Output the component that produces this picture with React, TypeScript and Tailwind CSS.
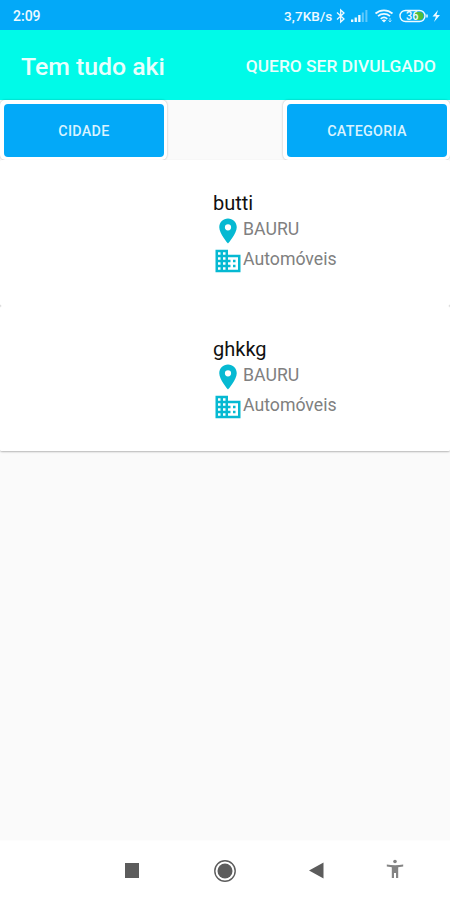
import React from "react";

function PinIcon() {
  return (
    <svg viewBox="0 0 24 24" className="h-[30px] w-[30px] shrink-0 fill-[#06b9d2]">
      <path d="M12 2C8.13 2 5 5.13 5 9c0 5.25 7 13 7 13s7-7.75 7-13c0-3.87-3.13-7-7-7zm0 9.5a2.5 2.5 0 0 1 0-5 2.5 2.5 0 0 1 0 5z" />
    </svg>
  );
}

function BuildingIcon() {
  return (
    <svg viewBox="0 0 24 24" className="h-[30px] w-[30px] shrink-0 fill-[#06b9d2]">
      <path d="M12 7V3H2v18h20V7H12zM6 19H4v-2h2v2zm0-4H4v-2h2v2zm0-4H4V9h2v2zm0-4H4V5h2v2zm4 12H8v-2h2v2zm0-4H8v-2h2v2zm0-4H8V9h2v2zm0-4H8V5h2v2zm10 12h-8v-2h2v-2h-2v-2h2v-2h-2V9h8v10zm-2-8h-2v2h2v-2zm0 4h-2v2h2v-2z" />
    </svg>
  );
}

function StatusBar() {
  return (
    <header className="flex h-[30px] items-center bg-[#03a9f8] pt-[2px] pl-[13px] text-[#eefaff]">
      <span className="w-[271px] text-[14px] leading-4 font-medium">2:09</span>
      <span className="w-[52px] text-[13.5px] leading-4 font-medium tracking-[0.1px] whitespace-nowrap">3,7KB/s</span>
      <svg width="114" height="18" viewBox="0 0 114 18" fill="none" className="shrink-0">
        <path d="M1 5.5 8 12 4.7 15V3L8 6 1 12.5" stroke="currentColor" strokeWidth="1.3" />
        <g fill="currentColor">
          <path d="M15 12.5h2.300V15H15zM18.600 10.500h2.300V15h-2.300zM22.200 8h2.300v7h-2.300z" />
          <path d="M25.800 5.500h2V15h-2zM29.400 3h2v12h-2z" opacity=".4" />
        </g>
        <g stroke="currentColor" strokeWidth="1.7">
          <path d="M39.500 6.500c5-4.300 12-4.300 17 0M42 9.200c3.500-3 8.500-3 12 0M44.700 11.800c2-1.700 4.600-1.700 6.600 0" />
        </g>
        <path d="m45.700 13.200 2.300 2.300 2.300-2.300c-1.400-1-3.200-1-4.600 0z" fill="currentColor" />
        <path d="M54 11v4m-1.500-1.500L54 15l1.500-1.500" stroke="#a9e1fd" />
        <rect x="64" y="3.500" width="25" height="11" rx="5.500" stroke="currentColor" strokeWidth="1.400" />
        <path d="M79 5h4.500a4 4 0 0 1 0 8H79z" fill="#50bd3b" />
        <path d="M91 7.500v3" stroke="currentColor" strokeWidth="1.500" />
        <text x="70" y="13.400" fill="currentColor" fontSize="12.500" fontWeight="500" textLength="12.500" lengthAdjust="spacingAndGlyphs">36</text>
        <path d="m102 3-5.500 6.500h3.500l-2 5.500 6-7h-3.500z" fill="currentColor" />
      </svg>
    </header>
  );
}

function FilterButton({ label }: { label: string }) {
  return (
    <div className="h-[60px] w-[167px] rounded-[5px] bg-white p-[4px] pr-[3px] shadow-[0_0_2px_rgba(0,0,0,0.3)]">
      <button className="flex h-[53px] w-full items-center justify-center rounded-[4px] bg-[#03a9f8] pt-[2px] text-[14.3px] font-medium tracking-[0.3px] text-[#d9f3ff]">
        {label}
      </button>
    </div>
  );
}

function Listing({ name, city, category }: { name: string; city: string; category: string }) {
  return (
    <article className="h-[145.500px] rounded-[2px] bg-white pt-[31px] pl-[213px]">
      <h2 className="h-[25px] text-[20px] leading-6 text-[#111]">{name}</h2>
      <div className="flex h-[30px] text-[17.7px] leading-[21px] text-[#808080]">
        <PinIcon />
        <span className="pt-[3px]">{city}</span>
      </div>
      <div className="flex h-[30px] text-[17.7px] leading-[21px] text-[#808080]">
        <BuildingIcon />
        <span className="pt-[3px]">{category}</span>
      </div>
    </article>
  );
}

function NavigationBar() {
  return (
    <nav className="flex h-[60px] items-center border-t border-[#fdfdfd] bg-white pl-[125px] text-[#5c5c5c]">
      <div className="h-[15px] w-[14px] bg-current" />
      <svg width="24" height="24" viewBox="0 0 24 24" className="ml-[74px]">
        <circle cx="12" cy="12" r="10.200" fill="none" stroke="currentColor" strokeWidth="1.400" />
        <circle cx="12" cy="12" r="7.500" fill="currentColor" />
      </svg>
      <svg width="15" height="17" viewBox="0 0 15 17" className="ml-[72px]" fill="currentColor">
        <path d="M0 8.500 14.500.5v16z" />
      </svg>
      <svg width="18" height="20" viewBox="0 0 18 20" className="-mt-[3px] ml-[62px] text-[#848484]" fill="currentColor">
        <circle cx="9" cy="2.500" r="1.800" />
        <path d="M.8 5.500c5.500 1 11 1 16.400 0v2l-5 .8V19h-2.200v-5H8v5H5.800V8.300l-5-.8z" />
      </svg>
    </nav>
  );
}

export default function App() {
  return (
    <div className="flex h-[900px] w-[450px] flex-col overflow-hidden bg-[#fafafa] font-[Roboto,sans-serif]">
      <StatusBar />
      <div className="flex h-[70px] items-center justify-between bg-[#00fae8] pr-[14px] pl-[21px] font-medium text-[#e9fffd]">
        <h1 className="pt-[3px] text-[24.8px] leading-7 whitespace-nowrap">Tem tudo aki</h1>
        <button className="pt-px text-[17.3px] leading-5 tracking-[0.05px] whitespace-nowrap">QUERO SER DIVULGADO</button>
      </div>
      <div className="flex h-[60px] justify-between">
        <FilterButton label="CIDADE" />
        <FilterButton label="CATEGORIA" />
      </div>
      <main className="flex-1">
        <div className="rounded-[2px] bg-[linear-gradient(to_bottom,#fafafa_140px,#c8c8c8_145px,#fafafa_150px)] shadow-[0_1px_2px_rgba(0,0,0,0.28)]">
          <Listing name="butti" city="BAURU" category="Automóveis" />
          <Listing name="ghkkg" city="BAURU" category="Automóveis" />
        </div>
      </main>
      <NavigationBar />
    </div>
  );
}
